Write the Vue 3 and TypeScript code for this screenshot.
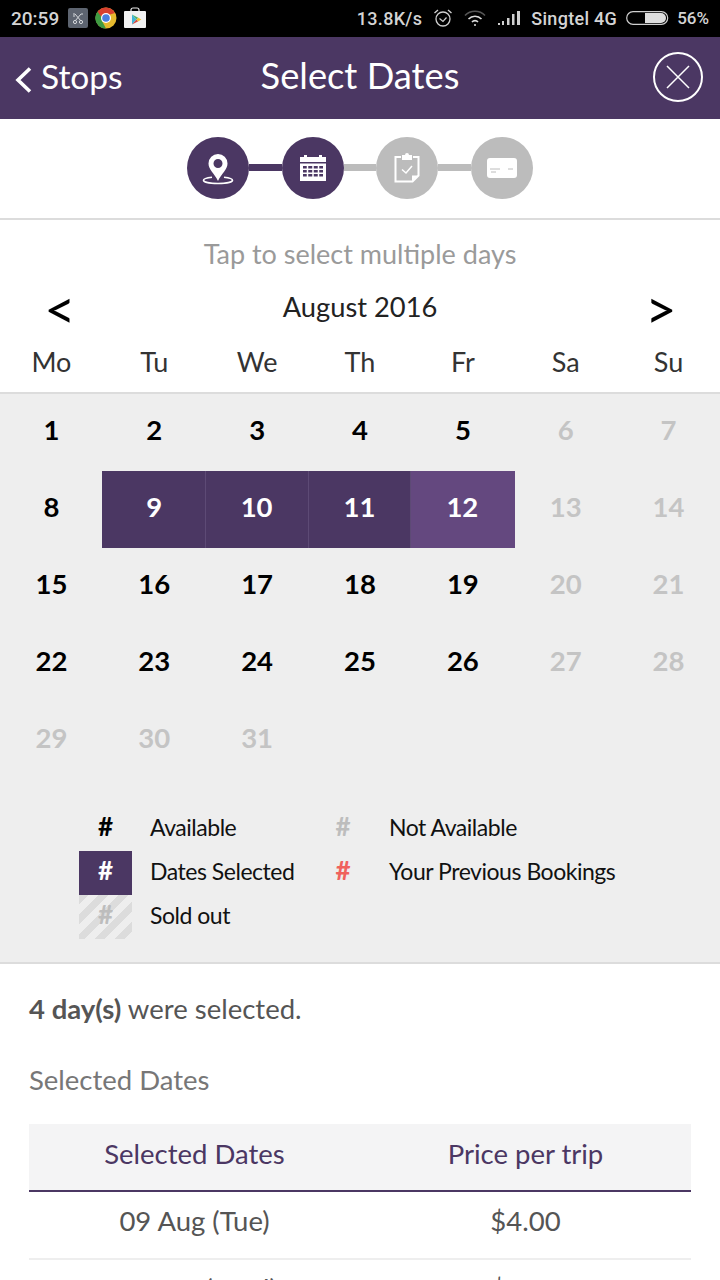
<script setup lang="ts">
type Day = { n: number; cls: string };
const weekdays = ['Mo', 'Tu', 'We', 'Th', 'Fr', 'Sa', 'Su'];
const days: Day[] = Array.from({ length: 31 }, (_, i) => {
  const n = i + 1;
  let cls = '';
  if (n === 9) cls = 'sel first';
  else if (n === 10 || n === 11) cls = 'sel';
  else if (n === 12) cls = 'sel last';
  else if (n >= 29 || i % 7 >= 5) cls = 'off';
  return { n, cls };
});
const rows = [
  { date: '09 Aug (Tue)', price: '$4.00' },
  { date: '10 Aug (Wed)', price: '$4.00' },
];
</script>

<template>
  <div class="page">
    <div class="status">
      <div class="st-left">
        <span class="time">20:59</span>
        <svg class="si" width="22" height="22" viewBox="0 0 22 22">
          <rect x="1" y="1" width="20" height="20" rx="2" fill="#5d6470" />
          <path d="M7 6v4M15 6v2M8 7l6 7M14 7l-6 7" stroke="#d5d8dc" stroke-width="1" fill="none" />
          <circle cx="8" cy="15" r="1.6" fill="none" stroke="#d5d8dc" />
          <circle cx="14" cy="15" r="1.6" fill="none" stroke="#d5d8dc" />
        </svg>
        <svg class="si" width="22" height="22" viewBox="0 0 22 22">
          <circle cx="11" cy="11" r="10.5" fill="#e5b92e" />
          <path d="M11 11 L2 16 A10.5 10.5 0 0 1 3.5 3.6 Z" fill="#3f9b43" />
          <path d="M11 .5 A10.5 10.5 0 0 0 2.6 4.8 L6.5 10 L20 6 A10.5 10.5 0 0 0 11 .5 Z" fill="#d8402f" />
          <path d="M2 5.5 L7 14 L11 21.5 A10.5 10.5 0 0 1 2 5.5 Z" fill="#3f9b43" />
          <circle cx="11" cy="11" r="5" fill="#fff" />
          <circle cx="11" cy="11" r="3.8" fill="#4a7fe0" />
        </svg>
        <svg class="si bag" width="24" height="24" viewBox="0 0 24 24">
          <path d="M8 5V3.500A2 2 0 0 1 10 2h4a2 2 0 0 1 2 2v1" fill="none" stroke="#e8e8e8" stroke-width="1.200" />
          <rect x="1" y="5" width="22" height="17" rx="1" fill="#f2f2f2" />
          <path d="M9 8.500v10l4.500-5z" fill="#3fb6d8" />
          <path d="M9 8.500l4.500 5 1.800-1.800z" fill="#53b46b" />
          <path d="M9 18.500l4.500-5 1.800 1.800z" fill="#d8483f" />
          <path d="M15.300 11.700l3 1.800-3 1.800-1.800-1.800z" fill="#efc22f" />
        </svg>
      </div>
      <div class="st-right">
        <span>13.8K/s</span>
        <svg width="20" height="20" viewBox="0 0 20 20" fill="none" stroke="#cfcfcf">
          <circle cx="10" cy="11" r="7" stroke-width="1.300" />
          <path d="M6.500 10.500l3.500 3 3.500-4" stroke-width="1.200" />
          <path d="M1.500 5L5 2M18.500 5L15 2" stroke-width="1.400" />
        </svg>
        <svg width="22" height="18" viewBox="0 0 22 18" fill="none" stroke="#dcdcdc" stroke-width="1.600">
          <path d="M1 6.500a14 14 0 0 1 20 0" stroke="#555" />
          <path d="M4.500 10a9 9 0 0 1 13 0" />
          <path d="M8 13a4 4 0 0 1 6 0" />
          <circle cx="11" cy="16" r="1" fill="#dcdcdc" stroke="none" />
        </svg>
        <svg class="signal" width="24" height="16" viewBox="0 0 24 16" fill="#cfcfcf">
          <rect x="1" y="13" width="2" height="2" /><rect x="5" y="11" width="2" height="4" /><rect x="10" y="8" width="2.500" height="7" /><rect x="15" y="4" width="2.500" height="11" /><rect x="20" y="1" width="3" height="14" />
        </svg>
        <span class="carrier">Singtel 4G</span>
        <svg class="batt" width="44" height="16" viewBox="0 0 44 16">
          <rect x=".7" y="1.700" width="41" height="12.600" rx="6.300" fill="none" stroke="#cfcfcf" stroke-width="1.200" />
          <path d="M19 3h16a5 5 0 0 1 0 10H19z" fill="#dedede" />
        </svg>
        <span class="pct">56%</span>
      </div>
    </div>

    <header class="bar">
      <div class="back">
        <svg width="20" height="30" viewBox="0 0 20 30" fill="none" stroke="#fff" stroke-width="3.600">
          <path d="M17 3.500L5 15l12 11.500" />
        </svg>
        <span>Stops</span>
      </div>
      <h1>Select Dates</h1>
      <svg class="close" width="52" height="52" viewBox="0 0 52 52" fill="none" stroke="#fff">
        <circle cx="26" cy="26" r="24" stroke-width="2" />
        <path d="M15 15l22 22M37 15L15 37" stroke-width="1.500" />
      </svg>
    </header>

    <section class="stepper">
      <div class="step on">
        <svg width="36" height="40" viewBox="0 0 36 40" fill="none">
          <path fill-rule="evenodd" d="M18 6a9.500 9.500 0 0 0-9.500 9.500C8.500 21.500 14.500 25.500 18 33c3.500-7.500 9.500-11.500 9.500-17.500A9.500 9.500 0 0 0 18 6zM18 11a4.500 4.500 0 1 1 0 9 4.500 4.500 0 0 1 0-9z" fill="#fff" />
          <path d="M12 29.300C7 29.800 3.500 30.800 3.500 32.300c0 1.800 6.500 3.200 14.500 3.200s14.500-1.400 14.500-3.200c0-1.500-3.500-2.500-8.500-3" stroke="#fff" stroke-width="1.600" />
        </svg>
      </div>
      <span class="link on"></span>
      <div class="step on">
        <svg width="28" height="28" viewBox="0 0 28 28">
          <path fill="#fff" d="M1 3h4V1h3v2h12V1h3v2h4v5H1z" />
          <path fill="#fff" fill-rule="evenodd" d="M1 9.500h26V27H1zM4 12v2.500h20V12zM4 16v2.500h20V16zM4 20v2.500h20V20z" />
          <path stroke="#fff" stroke-width="1.500" d="M8.500 11v14M14 11v14M19.500 11v14" />
        </svg>
      </div>
      <span class="link"></span>
      <div class="step">
        <svg width="26" height="30" viewBox="0 0 26 30" fill="none">
          <path d="M7 4H1.500v24.500h17l6-6V4H19" stroke="#fff" stroke-width="2" />
          <path d="M8 2h3a2 2 0 0 1 4 0h3v5H8z" fill="#fff" />
          <path d="M8 16.500l4 3.500 6-7" stroke="#fff" stroke-width="1.500" />
          <path d="M18 28v-5.500h6z" fill="#fff" />
        </svg>
      </div>
      <span class="link"></span>
      <div class="step">
        <svg width="30" height="20" viewBox="0 0 30 20">
          <rect width="30" height="20" rx="3" fill="#fff" />
          <path d="M3 11h10M21 11h5M4 14h5" stroke="#bcbcbc" stroke-width="1" />
        </svg>
      </div>
    </section>

    <p class="hint">Tap to select multiple days</p>

    <div class="month">
      <span class="arrow">&lt;</span>
      <span>August 2016</span>
      <span class="arrow">&gt;</span>
    </div>

    <div class="week">
      <span v-for="w in weekdays" :key="w">{{ w }}</span>
    </div>

    <section class="cal">
      <div class="grid">
        <div v-for="d in days" :key="d.n" class="day" :class="d.cls">{{ d.n }}</div>
      </div>
      <div class="legend">
        <div class="lg-mark avail">#</div>
        <div class="lg-label">Available</div>
        <div class="lg-mark na">#</div>
        <div class="lg-label wide">Not Available</div>
        <div class="lg-mark chosen">#</div>
        <div class="lg-label">Dates Selected</div>
        <div class="lg-mark prev">#</div>
        <div class="lg-label wide">Your Previous Bookings</div>
        <div class="lg-mark sold">#</div>
        <div class="lg-label">Sold out</div>
      </div>
    </section>

    <section class="summary">
      <p class="count"><b>4 day(s)</b> were selected.</p>
      <h2>Selected Dates</h2>
      <table>
        <thead>
          <tr><th>Selected Dates</th><th>Price per trip</th></tr>
        </thead>
        <tbody>
          <tr v-for="r in rows" :key="r.date"><td>{{ r.date }}</td><td>{{ r.price }}</td></tr>
        </tbody>
      </table>
    </section>
  </div>
</template>

<style>
html, body { margin: 0; background: #fff; }
</style>

<style scoped>
.page { width: 720px; height: 1280px; overflow: hidden; background: #fff; font-family: Lato, "Liberation Sans", sans-serif; }
.status { height: 37px; background: #000; display: flex; justify-content: space-between; align-items: center; padding: 0 11px 1px 11px; box-sizing: border-box; color: #d4d4d4; font-family: Roboto, sans-serif; font-size: 18px; font-weight: 500; }
.st-left { display: flex; align-items: center; }
.time { margin-right: 8px; font-size: 19px; }
.si { margin-right: 6px; }
.bag { margin-right: 0; }
.st-right { display: flex; align-items: center; gap: 11px; letter-spacing: .3px; }
.carrier { margin-left: -1px; }
.batt { margin-left: -2px; }
.pct { margin-left: -4px; font-size: 17px; letter-spacing: 0; }
.bar { height: 82px; background: #4b3763; display: flex; align-items: center; justify-content: space-between; position: relative; padding: 0 16px 0 13px; color: #fff; }
.back { display: flex; align-items: center; gap: 8px; font-size: 33.500px; }
.back svg { margin-top: 4px; }
.back span { margin-bottom: 4px; }
.close { margin-top: -3px; }
.bar h1 { position: absolute; left: 0; right: 0; top: 16px; text-align: center; margin: 0; font-size: 36.300px; line-height: 44px; font-weight: 400; }
.stepper { padding-bottom: 2px; height: 97px; border-bottom: 2px solid #dcdcdc; display: flex; align-items: center; justify-content: center; }
.step { width: 62px; height: 62px; border-radius: 50%; background: #bcbcbc; display: flex; align-items: center; justify-content: center; flex: none; }
.step.on { background: #4b3763; }
.link { width: 32.670px; height: 7px; background: #bcbcbc; flex: none; }
.link.on { background: #4b3763; }
.hint { margin: 0; height: 68px; line-height: 68px; text-align: center; font-size: 27px; color: #9a9a9a; }
.month { height: 42px; display: flex; justify-content: space-between; align-items: center; padding: 0 47px; font-size: 27.300px; color: #222; margin-top: -3px; }
.arrow { font-size: 54px; color: #000; line-height: 42px; font-weight: 400; width: 24px; display: flex; justify-content: center; margin-top: 6px; }
.arrow:first-child { margin-left: 1px; margin-right: -1px; }
.week { display: grid; grid-template-columns: repeat(7, 1fr); align-items: center; text-align: center; font-size: 27px; color: #333; box-sizing: border-box; border-bottom: 2px solid #dcdcdc; height: 67px; padding-top: 3px; }
.cal { background: #eeeeee; height: 570px; box-sizing: border-box; border-bottom: 2px solid #dcdcdc; }
.grid { display: grid; grid-template-columns: repeat(7, 1fr); grid-auto-rows: 77px; }
.day { display: flex; align-items: center; justify-content: center; font-size: 27.500px; font-weight: 700; color: #000; padding-bottom: 7px; box-sizing: border-box; }
.day.off { color: #c4c4c4; }
.day.sel { background: #4b3763; color: #fff; border-right: 1px solid #5d4a75; }
.day.first { margin-left: -1px; padding-left: 2px; }
.day.last { background: #64487f; border-right: 0; margin-right: -1px; padding-right: 2px; }
.legend { display: grid; grid-template-columns: 53px 197px 28px auto; grid-auto-rows: 44px; margin: 28px 0 0 79px; align-items: center; color: #111; font-size: 23px; }
.lg-label { padding-left: 18px; letter-spacing: -.47px; height: 44px; line-height: 40px; }
.lg-label.wide { padding-left: 32px; }
.lg-mark { text-align: center; font-weight: 700; font-size: 26px; height: 44px; line-height: 39px; }
.lg-mark.avail { color: #000; }
.lg-mark.na { color: #bdbdbd; }
.lg-mark.prev { color: #f0625d; }
.lg-mark.chosen { background: #4b3763; color: #fff; }
.lg-mark.sold { color: #bdbdbd; background: repeating-linear-gradient(135deg, #dcdcdc 0 7px, transparent 7px 14px); }
.summary { padding: 0 29px; color: #555; }
.count { margin: 0; padding-top: 28px; font-size: 27.500px; line-height: 34px; }
.count b { font-weight: 700; }
.summary h2 { margin: 37px 0 0; font-size: 27.500px; line-height: 34px; font-weight: 400; color: #777; }
table { width: 100%; border-collapse: collapse; margin-top: 27px; table-layout: fixed; font-size: 27.500px; }
th { height: 58px; background: #f4f4f5; border-bottom: 2px solid #4b3763; font-weight: 400; color: #4b3763; padding: 0 0 8px; }
td { height: 56px; text-align: center; border-bottom: 2px solid #eee; padding: 0 0 10px; color: #555; }
</style>
